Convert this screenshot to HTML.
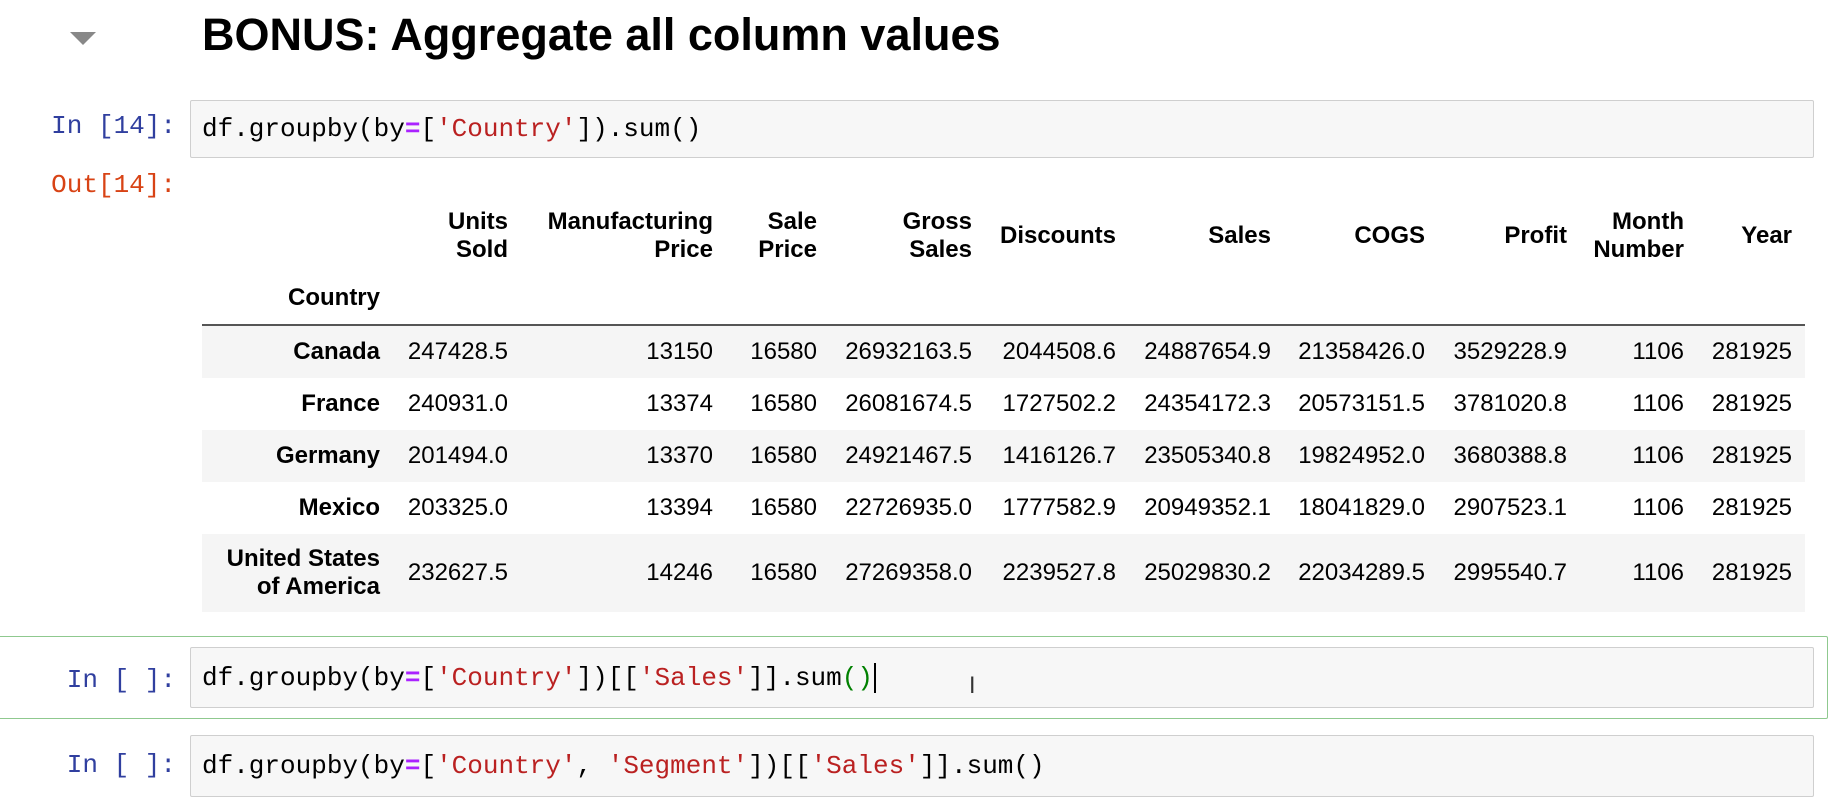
<!DOCTYPE html>
<html><head><meta charset="utf-8"><style>
body{margin:0;width:1838px;height:801px;background:#fff;position:relative;overflow:hidden;font-family:"Liberation Sans",Arial,sans-serif;}
.abs{position:absolute;}
.mono{font-family:"Liberation Mono","DejaVu Sans Mono",monospace;font-size:26px;white-space:pre;}
.code{position:absolute;left:190px;width:1624px;background:#f7f7f7;border:1px solid #cfcfcf;border-radius:2px;box-sizing:border-box;}
.code .mono{position:absolute;left:11px;top:50%;transform:translateY(-50%);color:#000;}
.p{position:absolute;right:1662px;text-align:right;color:#303f9f;}
.eq{color:#aa22ff;font-weight:bold}.s{color:#ba2121}.g{color:#008000}
table{position:absolute;left:202px;top:200px;border-collapse:collapse;font-size:24px;color:#000;table-layout:fixed;}
td,th{text-align:right;padding:0 13px 0 0;white-space:nowrap;}
th{font-weight:bold;line-height:28px;}
tbody tr:nth-child(odd){background:#f5f5f5;}
tbody td{height:52px;}
tbody th{height:52px;}
</style></head><body>
<svg class="abs" style="left:70px;top:32px" width="26" height="14"><polygon points="0,0 26,0 13,13" fill="#888"/></svg>
<div class="abs" style="left:202px;top:9px;font-size:45px;font-weight:bold;color:#000;">BONUS: Aggregate all column values</div>

<div class="p mono" style="top:111px;">In [14]:</div>
<div class="code" style="top:100px;height:58px;"><div class="mono">df.groupby(by<span class="eq">=</span>[<span class="s">'Country'</span>]).sum()</div></div>
<div class="abs mono" style="right:1662px;top:170px;color:#d84315;">Out[14]:</div>

<table>
<colgroup><col style="width:191px"><col style="width:128px"><col style="width:205px"><col style="width:104px"><col style="width:155px"><col style="width:144px"><col style="width:155px"><col style="width:154px"><col style="width:142px"><col style="width:117px"><col style="width:108px"></colgroup>
<thead>
<tr style="height:72px"><th></th><th>Units<br>Sold</th><th>Manufacturing<br>Price</th><th>Sale<br>Price</th><th>Gross<br>Sales</th><th>Discounts</th><th>Sales</th><th>COGS</th><th>Profit</th><th>Month<br>Number</th><th>Year</th></tr>
<tr style="height:53px;border-bottom:2px solid #555"><th style="vertical-align:middle">Country</th><th></th><th></th><th></th><th></th><th></th><th></th><th></th><th></th><th></th><th></th></tr>
</thead>
<tbody>
<tr><th>Canada</th><td>247428.5</td><td>13150</td><td>16580</td><td>26932163.5</td><td>2044508.6</td><td>24887654.9</td><td>21358426.0</td><td>3529228.9</td><td>1106</td><td>281925</td></tr>
<tr><th>France</th><td>240931.0</td><td>13374</td><td>16580</td><td>26081674.5</td><td>1727502.2</td><td>24354172.3</td><td>20573151.5</td><td>3781020.8</td><td>1106</td><td>281925</td></tr>
<tr><th>Germany</th><td>201494.0</td><td>13370</td><td>16580</td><td>24921467.5</td><td>1416126.7</td><td>23505340.8</td><td>19824952.0</td><td>3680388.8</td><td>1106</td><td>281925</td></tr>
<tr><th>Mexico</th><td>203325.0</td><td>13394</td><td>16580</td><td>22726935.0</td><td>1777582.9</td><td>20949352.1</td><td>18041829.0</td><td>2907523.1</td><td>1106</td><td>281925</td></tr>
<tr style="height:78px"><th style="line-height:28px">United States<br>of America</th><td>232627.5</td><td>14246</td><td>16580</td><td>27269358.0</td><td>2239527.8</td><td>25029830.2</td><td>22034289.5</td><td>2995540.7</td><td>1106</td><td>281925</td></tr>
</tbody></table>

<div class="abs" style="left:-2px;top:636px;width:1830px;height:83px;border:1px solid #8fc98f;box-sizing:border-box;border-radius:2px;"></div>
<div class="p mono" style="top:665px;">In [ ]:</div>
<div class="code" style="top:647px;height:61px;"><div class="mono">df.groupby(by<span class="eq">=</span>[<span class="s">'Country'</span>])[[<span class="s">'Sales'</span>]].sum<span class="g">()</span><span style="border-left:2px solid #000;margin-left:1px"></span></div></div>
<div class="abs" style="left:969px;top:674px;font-size:22px;color:#333;font-family:'DejaVu Sans',sans-serif;">I</div>

<div class="p mono" style="top:750px;">In [ ]:</div>
<div class="code" style="top:735px;height:62px;"><div class="mono">df.groupby(by<span class="eq">=</span>[<span class="s">'Country'</span>, <span class="s">'Segment'</span>])[[<span class="s">'Sales'</span>]].sum()</div></div>
</body></html>
